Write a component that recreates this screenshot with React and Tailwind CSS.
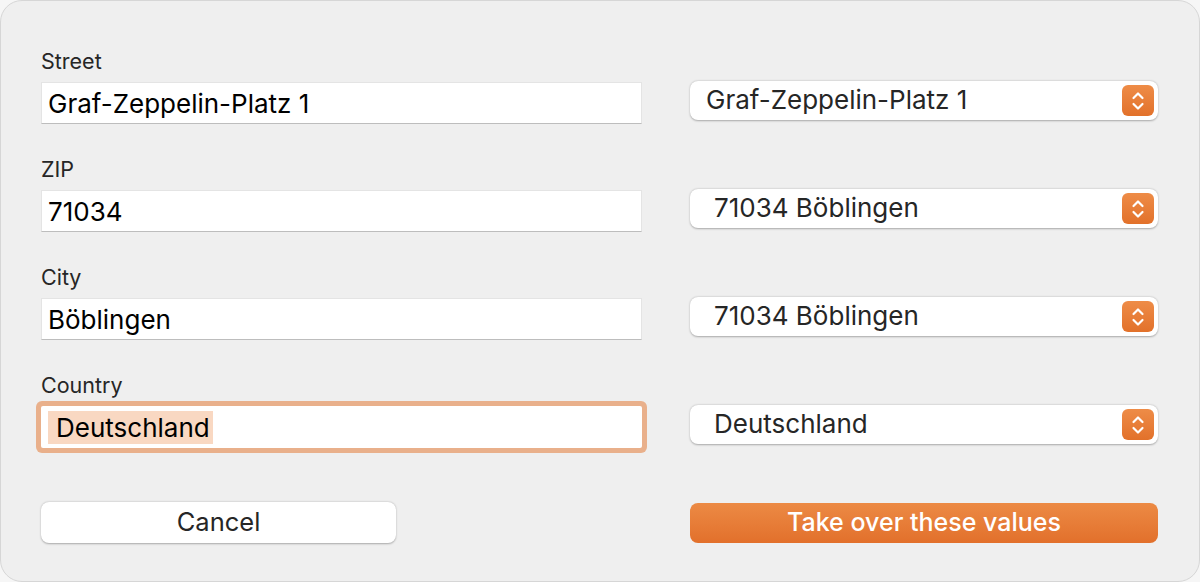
import React from 'react'

const rows = [
  { label: 'Street', value: 'Graf-Zeppelin-Platz 1', popup: 'Graf-Zeppelin-Platz 1', popupPad: 'pl-[16px]' },
  { label: 'ZIP', value: '71034', popup: '71034 Böblingen', popupPad: 'pl-[24px]' },
  { label: 'City', value: 'Böblingen', popup: '71034 Böblingen', popupPad: 'pl-[24px]' },
  { label: 'Country', value: 'Deutschland', popup: 'Deutschland', popupPad: 'pl-[24px]', focused: true },
]

function Stepper() {
  return (
    <div className="w-[32px] h-[31px] rounded-[6px] bg-gradient-to-b from-[#ee8c47] to-[#e2712a] flex items-center justify-center">
      <svg width="14" height="22" viewBox="0 0 14 22" fill="none">
        <path d="M2.5 8 L7 3.5 L11.5 8" stroke="white" strokeWidth="2.2" strokeLinecap="round" strokeLinejoin="round" />
        <path d="M2.5 14 L7 18.5 L11.5 14" stroke="white" strokeWidth="2.2" strokeLinecap="round" strokeLinejoin="round" />
      </svg>
    </div>
  )
}

function Field({ value, focused }) {
  if (focused) {
    return (
      <div className="h-[42px] bg-white rounded-[2px] ring-[5px] ring-[#e9b08b] flex items-center pl-[7px]">
        <span className="h-[33px] flex items-center pl-[8px] pr-[3px] bg-[#f9d8c2] text-[26px] text-black">{value}</span>
      </div>
    )
  }
  return (
    <div className="h-[42px] bg-white border border-[#e4e4e4] border-b-[#bdbdbd] flex items-center pl-[6px] text-[26px] text-black">
      {value}
    </div>
  )
}

export default function App() {
  return (
    <div className="w-[1200px] h-[582px] bg-[#f6f6f6]" style={{ fontFamily: 'Inter, "Liberation Sans", sans-serif' }}>
      <div className="w-full h-full rounded-[22px] border border-[#d6d6d6] bg-[#efefef] pt-[49px] pl-[40px]">
        <div className="flex flex-col gap-[34px]">
          {rows.map((r) => (
            <div key={r.label} className="flex gap-[48px]">
              <div className="w-[601px] flex flex-col">
                <div className="h-[22px] leading-[22px] text-[21.5px] text-[#262626]">{r.label}</div>
                <div className="mt-[10px]">
                  <Field value={r.value} focused={r.focused} />
                </div>
              </div>
              <div className="w-[468px] pt-[31px]">
                <div className={`h-[39px] bg-white rounded-[8px] shadow-[0_0.5px_2px_rgba(0,0,0,0.3)] flex items-center justify-between pr-[4px] ${r.popupPad}`}>
                  <span className="text-[26px] leading-[30px] text-[#262626] -mt-[2px]">{r.popup}</span>
                  <Stepper />
                </div>
              </div>
            </div>
          ))}
        </div>
        <div className="flex gap-[48px] mt-[54px]">
          <div className="w-[601px]">
            <button className="w-[355px] h-[41px] bg-white rounded-[8px] shadow-[0_0.5px_2px_rgba(0,0,0,0.3)] text-[25.5px] text-[#262626] flex items-center justify-center">
              Cancel
            </button>
          </div>
          <button className="w-[468px] h-[40px] mt-[1px] rounded-[8px] bg-gradient-to-b from-[#ec8a44] to-[#e2702b] text-[25px] text-white font-medium flex items-center justify-center">
            Take over these values
          </button>
        </div>
      </div>
    </div>
  )
}
